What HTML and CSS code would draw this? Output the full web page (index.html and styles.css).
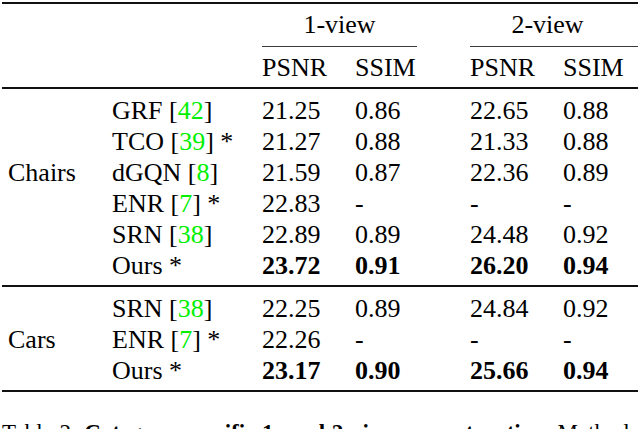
FILE: index.html
```html
<!DOCTYPE html>
<html lang="en">
<head>
    <meta charset="UTF-8">
    <title>Table 2</title>
    <link rel="stylesheet" href="styles.css">
</head>
<body>
    <div class="table">
        <div class="rule thick first"></div>

        <div class="head-top">
            <div class="span-head">1-view</div>
            <div class="span-head second">2-view</div>
        </div>
        <div class="cmid-row">
            <div class="cmid"></div>
            <div class="cmid wide"></div>
        </div>
        <div class="grid head-sub">
            <div></div><div></div>
            <div>PSNR</div><div>SSIM</div><div>PSNR</div><div>SSIM</div>
        </div>

        <div class="rule mid"></div>

        <div class="grid group">
            <div class="cat" style="grid-row: 3">Chairs</div>
            <div class="m">GRF [<span class="cite">42</span>]</div><div>21.25</div><div>0.86</div><div>22.65</div><div>0.88</div>
            <div class="m">TCO [<span class="cite">39</span>] *</div><div>21.27</div><div>0.88</div><div>21.33</div><div>0.88</div>
            <div class="m">dGQN [<span class="cite">8</span>]</div><div>21.59</div><div>0.87</div><div>22.36</div><div>0.89</div>
            <div class="m">ENR [<span class="cite">7</span>] *</div><div>22.83</div><div>-</div><div>-</div><div>-</div>
            <div class="m">SRN [<span class="cite">38</span>]</div><div>22.89</div><div>0.89</div><div>24.48</div><div>0.92</div>
            <div class="m">Ours *</div><div class="b">23.72</div><div class="b">0.91</div><div class="b">26.20</div><div class="b">0.94</div>
        </div>

        <div class="rule mid"></div>

        <div class="grid group">
            <div class="cat" style="grid-row: 2">Cars</div>
            <div class="m">SRN [<span class="cite">38</span>]</div><div>22.25</div><div>0.89</div><div>24.84</div><div>0.92</div>
            <div class="m">ENR [<span class="cite">7</span>] *</div><div>22.26</div><div>-</div><div>-</div><div>-</div>
            <div class="m">Ours *</div><div class="b">23.17</div><div class="b">0.90</div><div class="b">25.66</div><div class="b">0.94</div>
        </div>

        <div class="rule thick last"></div>
    </div>

    <p class="caption">Table 2: <strong>Category-specific 1- and 2-view reconstruction.</strong> Methods marked with * only need camera poses at test time.</p>
</body>
</html>
```

FILE: styles.css
```css
body {
    margin: 0;
    padding: 0 2px;
    background: #fff;
    color: #000;
    font-family: "Liberation Serif", "Times New Roman", serif;
    font-size: 26px;
    overflow: hidden;
}

.table {
    width: 636px;
}

.rule {
    background: #111;
    height: 2px;
}

.rule.first {
    margin-top: 2px;
}

.rule.mid,
.rule.last {
    margin-top: 4px;
}

.head-top {
    display: flex;
    padding-top: 5px;
    padding-left: 260px;
    line-height: 31px;
    height: 31px;
}

.span-head {
    width: 155px;
    text-align: center;
}

.span-head.second {
    margin-left: 53px;
}

.cmid-row {
    display: flex;
    margin-top: 6px;
    padding-left: 260px;
}

.cmid {
    width: 155px;
    height: 1px;
    background: #3a3a3a;
}

.cmid.wide {
    width: 168px;
    margin-left: 53px;
}

.grid {
    display: grid;
    grid-template-columns: 104px 150px 93px 115px 93px 1fr;
    grid-auto-rows: 31px;
    line-height: 31px;
    padding-left: 6px;
}

.head-sub {
    margin-top: 5px;
    margin-bottom: 2px;
}

.group {
    padding: 6px 0 0 6px;
}

.cat {
    grid-column: 1;
}

.m {
    grid-column: 2;
}

.cite {
    color: #00f000;
}

.b {
    font-weight: bold;
}

.caption {
    width: 636px;
    margin: 27px 0 0;
    font-size: 23px;
    line-height: 28px;
    word-spacing: -1px;
    text-align: justify;
}
```
